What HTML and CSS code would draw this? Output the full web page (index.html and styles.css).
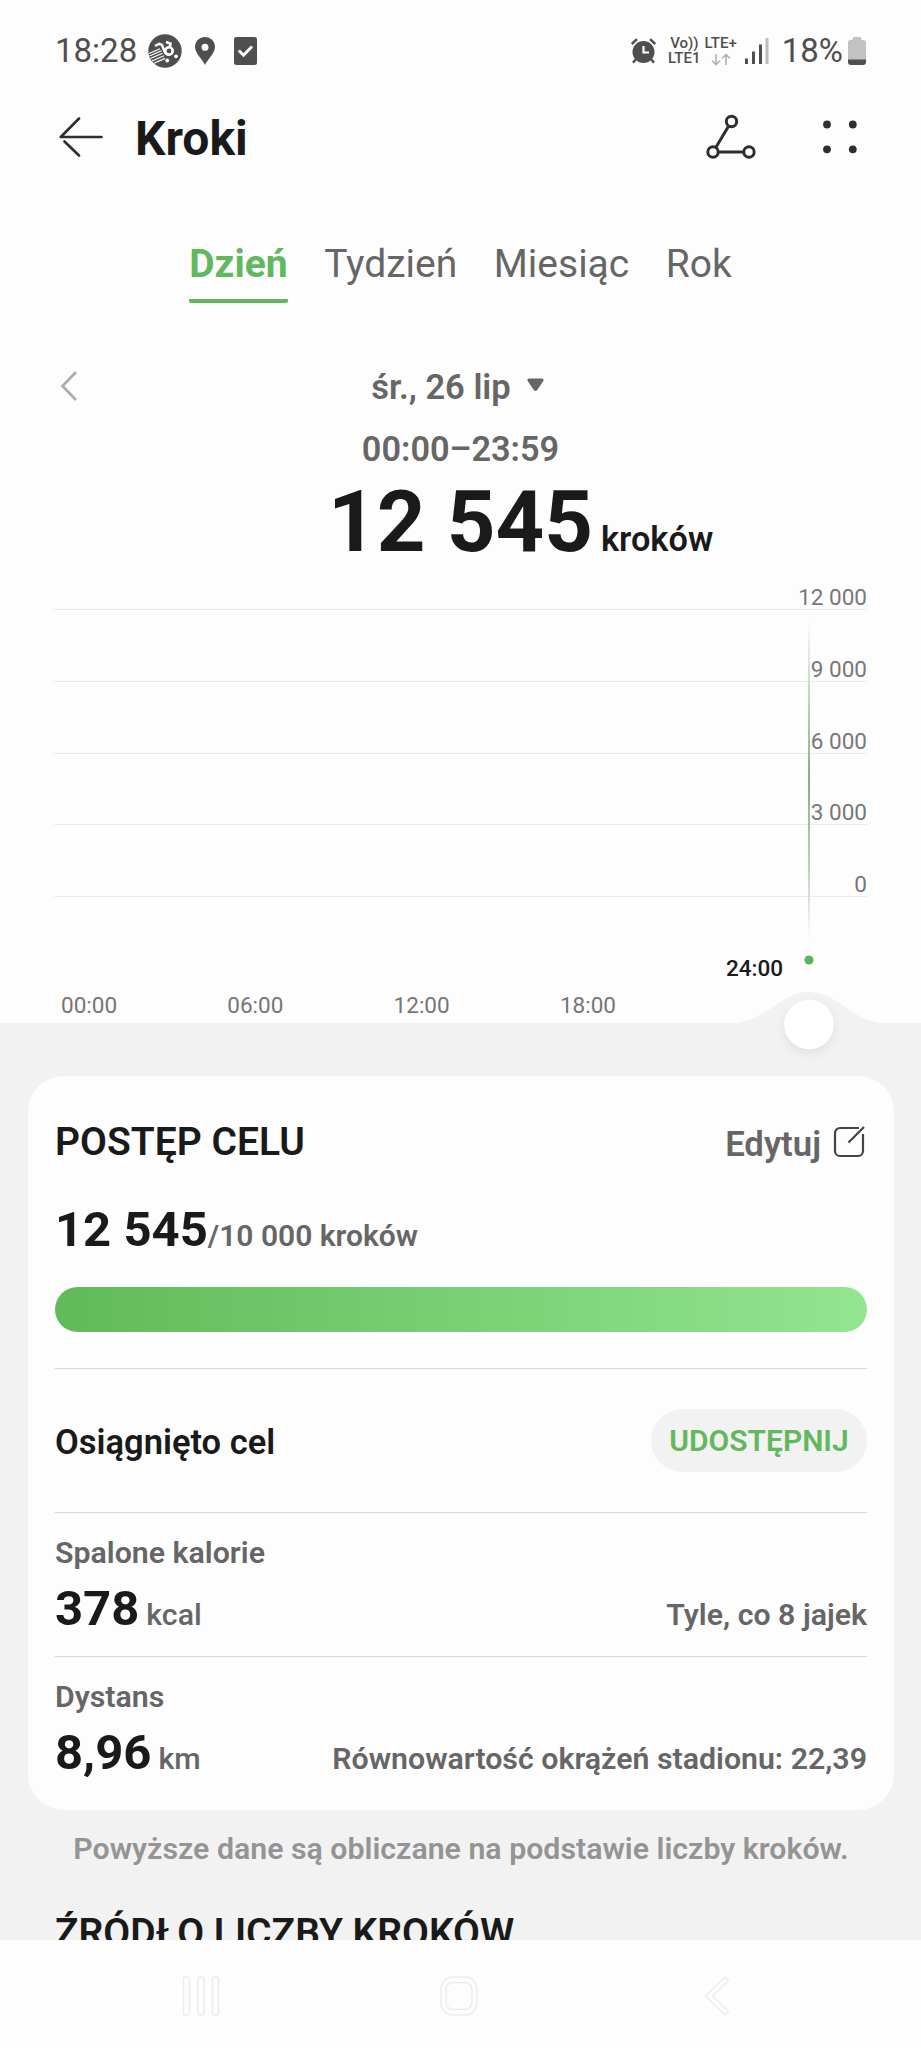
FILE: index.html
```html
<!DOCTYPE html>
<html lang="pl">
<head>
<meta charset="utf-8">
<title>Kroki</title>
<link rel="stylesheet" href="styles.css">
</head>
<body>
<main class="screen">
  <div class="status">
    <div class="status-left">
      <span class="clock">18:28</span>
      <svg class="ic-app" width="34" height="34" viewBox="0 0 34 34"><circle cx="17" cy="17" r="16.700" fill="#4f4f4f"/><g fill="none" stroke="#fff"><path d="M7 11.800l4.500-2 2.500 1.200 2.500 6.500q1.500 3.500 5 3.300" stroke-width="2.400"/><circle cx="21" cy="17" r="3.700" stroke-width="2.600"/><path d="M18 8l4.500 1.500-.8 4" stroke-width="2.600"/><path d="M1 19.500l11-4.800M1.500 22l12-5.200M2.500 24.500l12-5.200M4 27l12-5.200M6 29.200l11-4.800" stroke-width="1.200"/></g><circle cx="19.200" cy="26.500" r="1.900" fill="#fff"/><circle cx="28" cy="22.300" r="1.900" fill="#fff"/></svg>
      <svg class="ic-pin" width="20" height="28" viewBox="0 0 20 28"><path fill="#4f4f4f" fill-rule="evenodd" d="M10 0C4.500 0 0 4.400 0 9.800 0 16.500 8 23 10 28c2-5 10-11.500 10-18.200C20 4.400 15.500 0 10 0zm0 6.700a3.500 3.500 0 1 1 0 7 3.500 3.500 0 0 1 0-7z"/></svg>
      <svg class="ic-check" width="23" height="28" viewBox="0 0 23 28"><rect width="23" height="28" rx="2.500" fill="#4f4f4f"/><path d="M4.800 13.500l4.700 4.700 8.500-8.700" fill="none" stroke="#fff" stroke-width="3"/></svg>
    </div>
    <div class="status-right">
      <svg class="ic-alarm" width="25" height="26" viewBox="0 0 25 26"><g stroke="#4f4f4f" fill="none" stroke-width="2.400"><path d="M.8 6L6 1.200M24.200 6L19 1.200M5 21l-3 3.800M20 21l3 3.800"/></g><circle cx="12.500" cy="14" r="11" fill="#4f4f4f"/><path d="M12.500 8v6.500H18" fill="none" stroke="#fff" stroke-width="2.200"/></svg>
      <div class="net net-volte"><span>Vo))</span><span>LTE1</span></div>
      <div class="net net-lte"><span>LTE+</span><svg width="20" height="13" viewBox="0 0 20 13"><path d="M5 1v10M1 7.500l4 4 4-4M15 12V1.500M11 5.500l4-4 4 4" fill="none" stroke="#b5b5b5" stroke-width="1.700"/></svg></div>
      <svg class="ic-signal" width="24" height="26" viewBox="0 0 24 26"><path fill="#4f4f4f" d="M0 20.500h3V26H0zM7 13.500h3V26H7zM14 6.500h3V26h-3z"/><path fill="#bdbdbd" d="M20.500 0h3v26h-3z"/></svg>
      <span class="percent">18%</span>
      <svg class="ic-battery" width="18" height="28" viewBox="0 0 18 28"><path fill="#c2c2c2" d="M5.500 0h7l1.500 3h1.500A2.500 2.500 0 0 1 18 5.500V23H0V5.500A2.500 2.500 0 0 1 2.500 3H4z"/><path fill="#4f4f4f" d="M0 22.500h18V25a3 3 0 0 1-3 3H3a3 3 0 0 1-3-3z"/></svg>
    </div>
  </div>

  <header class="appbar">
    <svg class="ic-back" width="44" height="40" viewBox="0 0 44 40"><path d="M20 1.500L1.800 20H42.500M5.500 24.500L20 38.500" fill="none" stroke="#2e2e2e" stroke-width="2.600" stroke-linecap="round" stroke-linejoin="round"/></svg>
    <h1>Kroki</h1>
    <svg class="ic-route" width="50" height="46" viewBox="0 0 50 46"><g fill="none" stroke="#2e2e2e" stroke-width="3"><circle cx="25.500" cy="7.500" r="5.200"/><circle cx="7" cy="38" r="5.200"/><circle cx="43" cy="38" r="5.200"/><path d="M22.700 12L9.800 33.500M12.200 38h25.600"/></g></svg>
    <svg class="ic-more" width="34" height="34" viewBox="0 0 34 34"><g fill="#2e2e2e"><circle cx="4" cy="4.500" r="3.900"/><circle cx="29.800" cy="4.500" r="3.900"/><circle cx="4" cy="29.300" r="3.900"/><circle cx="29.800" cy="29.300" r="3.900"/></g></svg>
  </header>

  <nav class="tabs">
    <span class="tab active">Dzień</span><span class="tab">Tydzień</span><span class="tab">Miesiąc</span><span class="tab">Rok</span>
  </nav>

  <div class="date-row">
    <svg class="ic-prev" width="18" height="32" viewBox="0 0 18 32"><path d="M16 2L2.500 16 16 30" fill="none" stroke="#aaa" stroke-width="2.600"/></svg>
    <div class="date"><span>śr., 26 lip</span><svg width="17" height="14" viewBox="0 0 17 14"><path d="M2 .5h13q2 0 1.500 2.300L10.200 12Q8.500 14 6.800 12L.5 2.800Q0 .5 2 .5z" fill="#666"/></svg></div>
  </div>
  <div class="range">00:00–23:59</div>
  <div class="total"><strong>12 545</strong><span>kroków</span></div>

  <section class="chart">
    <div class="grid">
      <div class="line first">12 000</div>
      <div class="line">9 000</div>
      <div class="line">6 000</div>
      <div class="line">3 000</div>
      <div class="line">0</div>
    </div>
    <div class="current">24:00</div>
    <div class="axis"><span>00:00</span><span>06:00</span><span>12:00</span><span>18:00</span></div>
    <svg class="marker" width="176" height="490" viewBox="0 0 176 490">
      <defs>
        <linearGradient id="beam" x1="0" y1="0" x2="0" y2="1"><stop offset="0" stop-color="#ddd" stop-opacity="0"/><stop offset=".16" stop-color="#d5ddd4"/><stop offset=".2" stop-color="#bfe3bc"/><stop offset=".5" stop-color="#7fb47b"/><stop offset=".8" stop-color="#b5e0b1"/><stop offset=".85" stop-color="#d5dbd5"/><stop offset="1" stop-color="#ddd" stop-opacity="0"/></linearGradient>
        <filter id="soft" x="-50%" y="-50%" width="200%" height="200%"><feDropShadow dx="0" dy="4" stdDeviation="5" flood-color="#000" flood-opacity=".08"/></filter>
      </defs>
      <rect x="87" y="46" width="2" height="323" fill="url(#beam)"/>
      <circle cx="88" cy="388" r="4.600" fill="#5fb45b"/>
      <path d="M8 451.500C45 451.500 58 420 88 420S131 451.500 168 451.500z" fill="#f2f2f2"/>
      <circle cx="88" cy="452.500" r="24.700" fill="#fff" filter="url(#soft)"/>
    </svg>
  </section>

  <section class="details">
    <div class="card">
      <div class="card-head">
        <h2>POSTĘP CELU</h2>
        <div class="edit"><span>Edytuj</span><svg width="32" height="32" viewBox="0 0 32 32"><path d="M26 2H7a5 5 0 0 0-5 5v18a5 5 0 0 0 5 5h18a5 5 0 0 0 5-5V8M31 1L15.500 16.500" fill="none" stroke="#444" stroke-width="2.200"/></svg></div>
      </div>
      <div class="progress-text"><strong>12 545</strong><span>/10 000 kroków</span></div>
      <div class="bar"></div>
      <div class="goal"><span>Osiągnięto cel</span><button class="share">UDOSTĘPNIJ</button></div>
      <div class="stat">
        <div class="label">Spalone kalorie</div>
        <div class="values"><strong>378</strong><span class="unit">kcal</span><span class="note">Tyle, co 8 jajek</span></div>
      </div>
      <div class="stat">
        <div class="label">Dystans</div>
        <div class="values"><strong>8,96</strong><span class="unit">km</span><span class="note">Równowartość okrążeń stadionu: 22,39</span></div>
      </div>
    </div>
    <p class="hint">Powyższe dane są obliczane na podstawie liczby kroków.</p>
    <h2 class="source">ŹRÓDŁO LICZBY KROKÓW</h2>
  </section>
</main>

<footer class="sysnav">
  <svg width="38" height="40" viewBox="0 0 38 40"><g fill="none" stroke="#ececec" stroke-width="1.500"><rect x="1.500" y="1" width="6" height="38" rx="2"/><rect x="16" y="1" width="6" height="38" rx="2"/><rect x="30.500" y="1" width="6" height="38" rx="2"/></g></svg>
  <svg class="home" width="38" height="40" viewBox="0 0 38 40"><g fill="none" stroke="#ececec" stroke-width="1.500"><rect x="1" y="1" width="36" height="38" rx="12"/><rect x="6" y="6.500" width="26" height="27" rx="7"/></g></svg>
  <svg width="26" height="40" viewBox="0 0 26 40"><path d="M21 1L1.500 20 21 39l3.500-3.500L8.500 20 24.500 4.500z" fill="none" stroke="#ececec" stroke-width="1.500" stroke-linejoin="round"/></svg>
</footer>
</body>
</html>
```
FILE: styles.css
```css
* { box-sizing: border-box; }
body {
  margin: 0;
  width: 921px;
  height: 2048px;
  overflow: hidden;
  display: flex;
  flex-direction: column;
  background: #fdfdfd;
  color: #1a1a1a;
  font-family: Roboto, "Noto Sans", sans-serif;
}
svg { display: block; flex: none; }
h1, h2, p { margin: 0; }
.screen { flex: 1; min-height: 0; overflow: hidden; }

.status {
  height: 102px;
  padding: 0 55px 0 55px;
  display: flex;
  align-items: center;
  justify-content: space-between;
  color: #4f4f4f;
}
.status-left, .status-right { display: flex; align-items: center; }
.clock, .percent { font-size: 33px; line-height: 40px; font-weight: 450; }
.ic-app { margin-left: 11px; }
.ic-pin { margin-left: 13px; }
.ic-check { margin-left: 19px; }
.net {
  display: flex;
  flex-direction: column;
  align-items: center;
  font-size: 15px;
  line-height: 15px;
  font-weight: 500;
}
.net svg { margin-top: 2px; }
.net-volte { margin-left: 12px; }
.net-lte { margin-left: 4px; }
.ic-signal { margin-left: 8px; }
.percent { margin-left: 13px; }
.ic-battery { margin-left: 5px; }

.appbar {
  height: 74px;
  padding: 0 64px 0 59px;
  display: flex;
  align-items: center;
}
.appbar h1 { margin-left: 32px; flex: 1; font-size: 48px; line-height: 56px; font-weight: 700; }
.ic-back { margin-top: -4px; }
.ic-route, .ic-more { margin-top: -5px; }
.ic-more { margin-left: 67px; }

.tabs {
  padding-top: 65px;
  display: flex;
  justify-content: center;
  gap: 36.5px;
  color: #666;
  font-size: 39px;
  line-height: 46px;
}
.tab { padding-bottom: 12px; border-bottom: 4px solid transparent; }
.tab.active { color: #62b85c; font-weight: 700; border-color: #62b85c; border-radius: 2px; }

.date-row {
  margin-top: 61px;
  height: 46px;
  padding: 0 66px 0 60px;
  display: grid;
  grid-template-columns: 18px 1fr 18px;
  align-items: center;
  color: #666;
}
.ic-prev { margin-top: -3px; }
.date { display: flex; justify-content: center; align-items: center; gap: 16px; font-size: 34.5px; line-height: 44px; font-weight: 600; }
.date svg { margin-top: -5px; }
.range {
  margin-top: 19px;
  text-align: center;
  font-size: 34.300px;
  line-height: 40px;
  font-weight: 600;
  color: #666;
}
.total {
  margin-top: 3px;
  display: grid;
  grid-template-columns: 1fr auto 1fr;
  align-items: baseline;
}
.total strong { grid-column: 2; font-size: 85px; line-height: 100px; font-weight: 700; }
.total span { padding-left: 8px; font-size: 34.300px; line-height: 40px; font-weight: 600; }

.chart { position: relative; height: 451px; }
.grid { padding: 0 54px; }
.line {
  height: 71.8px;
  display: flex;
  justify-content: flex-end;
  align-items: flex-end;
  border-bottom: 1.5px solid #ebebeb;
  color: #777;
  font-size: 22.5px;
  line-height: 24px;
}
.line.first { height: 38px; }
.current {
  margin-top: 58px;
  padding-right: 138px;
  text-align: right;
  font-size: 22.5px;
  line-height: 26px;
  font-weight: 500;
}
.axis {
  margin-top: 11px;
  padding-left: 61px;
  display: grid;
  grid-template-columns: repeat(4, 166.3px);
  color: #757575;
  font-size: 22.5px;
  line-height: 26px;
}
.marker { position: absolute; left: 721px; top: 0; overflow: visible; }

.details { height: 1100px; padding: 53px 27px 0 28px; background: #f2f2f2; }
.card { height: 734px; padding: 36px 27px 0; border-radius: 36px; background: #fdfdfd; }
.card-head { height: 60px; display: flex; justify-content: space-between; align-items: center; }
h2 { font-size: 39px; line-height: 50px; font-weight: 600; }
.edit { display: flex; align-items: center; gap: 12px; padding: 3px 2px 0 0; color: #666; font-size: 34.700px; line-height: 40px; font-weight: 600; }
.edit svg { margin-top: -3px; }
.progress-text { margin-top: 28px; height: 59px; display: flex; align-items: baseline; }
.progress-text strong, .values strong { font-size: 49px; line-height: 60px; font-weight: 700; }
.progress-text span { font-size: 30px; font-weight: 600; color: #666; }
.bar { margin-top: 28px; height: 45px; border-radius: 23px; background: linear-gradient(90deg, #61ba59, #93e590); }
.goal {
  margin-top: 36px;
  height: 144px;
  border-top: 1.500px solid #d8d8d8;
  display: flex;
  align-items: center;
  justify-content: space-between;
  font-size: 34.500px;
  font-weight: 600;
}
.goal span { padding-top: 2px; }
.share {
  width: 216px;
  height: 63px;
  padding: 0;
  border: 0;
  border-radius: 32px;
  background: #f2f2f2;
  color: #62b85c;
  font: 600 30px/40px Roboto, sans-serif;
}
.stat { height: 144px; padding-top: 20px; border-top: 1px solid #d8d8d8; }
.label { font-size: 30.300px; line-height: 40px; font-weight: 600; color: #666; }
.values { margin-top: 6px; height: 59px; display: flex; align-items: baseline; font-size: 30.300px; color: #666; font-weight: 600; }
.values strong { color: #1a1a1a; }
.unit { margin-left: 7px; font-weight: 500; }
.note { margin-left: auto; }
.hint { margin-top: 19px; text-align: center; font-size: 30.300px; line-height: 40px; font-weight: 600; color: #949494; }
.source { margin: 39px 0 0 27px; }

.sysnav {
  height: 108px;
  flex: none;
  padding: 4px 0 0 182px;
  display: flex;
  align-items: center;
  background: #fdfdfd;
}
.home { margin: 0 226px 0 220px; }
```
